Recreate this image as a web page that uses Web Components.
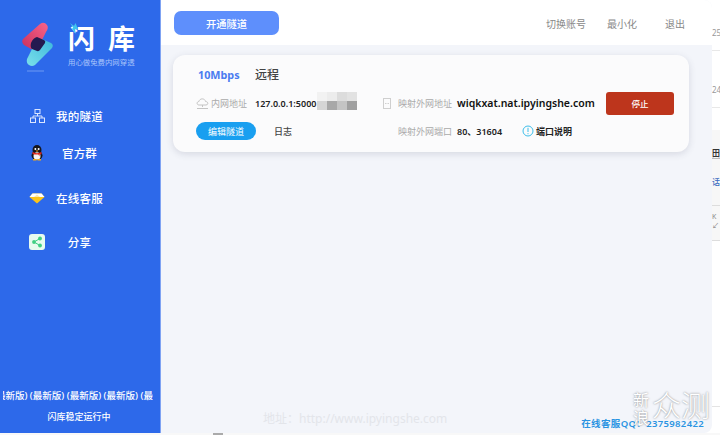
<!DOCTYPE html>
<html lang="zh">
<head>
<meta charset="utf-8">
<title>闪库</title>
<style>
    html, body { margin: 0; height: 100%; overflow: hidden; background: #fff; }
    body { font-family: "Noto Sans", "Noto Sans CJK SC", sans-serif; }
</style>
</head>
<body>
<app-window>
    <side-bar slot="side"></side-bar>
    <top-bar slot="top"></top-bar>
    <tunnel-card slot="main"></tunnel-card>
    <foot-note slot="foot"></foot-note>
    <page-edge slot="edge"></page-edge>
</app-window>

<script>
const CJK = '"Noto Sans", "Noto Sans CJK SC", sans-serif';

class AppWindow extends HTMLElement {
    constructor() {
        super();
        this.attachShadow({ mode: 'open' });
        this.shadowRoot.innerHTML = `
            <style>
                :host { display: block; width: 720px; height: 435px; font-family: ${CJK}; }
                .top { display: flex; height: 433px; }
                .win { width: 712px; height: 433px; display: flex; background: #f3f5fa; border-radius: 0 8px 8px 0; overflow: hidden; }
                .body { flex: 1; display: flex; flex-direction: column; min-width: 0; }
                .main { flex: 1; padding: 10px 23px 0 12px; }
                .edge { flex: 1; min-width: 0; }
                .under { height: 2px; background: #f8f8f8; padding-left: 213px; }
                .under div { width: 10px; height: 2px; background: #aaa; }
            </style>
            <div class="top">
                <div class="win">
                    <slot name="side"></slot>
                    <div class="body">
                        <slot name="top"></slot>
                        <div class="main"><slot name="main"></slot></div>
                        <slot name="foot"></slot>
                    </div>
                </div>
                <div class="edge"><slot name="edge"></slot></div>
            </div>
            <div class="under"><div></div></div>
        `;
    }
}

class SideBar extends HTMLElement {
    constructor() {
        super();
        this.attachShadow({ mode: 'open' });
        this.shadowRoot.innerHTML = `
            <style>
                :host { display: flex; flex-direction: column; width: 160px; height: 433px; flex: none; background: #2d69ea; border-right: 1px solid #7fa3f3; color: #fff; overflow: hidden; }
                .logo { display: flex; height: 106px; padding: 20px 0 0 21px; box-sizing: border-box; }
                .mark { width: 34px; height: 56px; flex: none; }
                .brand { margin-left: 13px; position: relative; }
                .name { font-size: 27px; line-height: 30px; font-weight: 700; display: flex; gap: 13px; margin-top: 4px; }
                .bolt { position: absolute; left: 2px; top: 3px; }
                .sub { font-size: 7.400px; line-height: 10px; color: #a9c4fa; margin-top: 3px; white-space: nowrap; }
                .spacer { flex: 1; }
                .ticker { height: 20px; line-height: 20px; font-size: 9.500px; font-weight: 500; white-space: nowrap; overflow: hidden; display: flex; justify-content: flex-end; margin: 2px 7px 0 3px; }
                .ticker span { flex: none; }
                .status { height: 22px; line-height: 22px; font-size: 9px; font-weight: 500; text-align: center; margin: 0 0 5px; padding-right: 2px; }
            </style>
            <div class="logo">
                <svg class="mark" viewBox="0 0 34 56">
                    <defs>
                        <linearGradient id="r" x1="0" y1="1" x2="1" y2="0"><stop offset="0" stop-color="#c92f5c"/><stop offset="1" stop-color="#f9648a"/></linearGradient>
                        <linearGradient id="c" x1="0" y1="1" x2="1" y2="0"><stop offset="0" stop-color="#7be0ea"/><stop offset="1" stop-color="#3cb8dc"/></linearGradient>
                    </defs>
                    <path d="M19 4Q23 1 26 5 28 8 25 12L17 28Q15 31 12 30L3 25Q0 22 2 19z" fill="url(#r)"/>
                    <path d="M21 19 30 23Q33 25 31 28L14 45Q11 47 8 45 5 43 6 39L11 29z" fill="url(#c)"/>
                    <path d="M10 23Q12 18 16 17L23 20Q25 21 24 23L19 30Q18 31.500 16 31L11 29Q9 27 10 23z" fill="#241a50"/>
                    <path d="M6 51H23" stroke="#6f9af2" stroke-width="1"/>
                </svg>
                <div class="brand">
                    <div class="name"><span>闪</span><span>库</span></div>
                    <svg class="bolt" width="9" height="11" viewBox="0 0 9 11"><path d="M0 0 4 3 5.500 0 8 6 5 6.500 6 11 2 6 3 4.500z" fill="#3fc3ef"/></svg>
                    <div class="sub">用心做免费内网穿透</div>
                </div>
            </div>
            <nav-item label="我的隧道" style="margin-top:0">
                <svg width="15" height="14" viewBox="0 0 15 14" fill="none" stroke="#dbe6ff" stroke-width="1"><rect x="5" y=".5" width="5" height="4"/><rect x=".5" y="9" width="5" height="4.500"/><rect x="9.500" y="9" width="5" height="4.500"/><path d="M7.500 4.500V7M3 9V7H12V9"/></svg>
            </nav-item>
            <nav-item label="官方群" style="margin-top:17px">
                <svg width="14" height="16" viewBox="0 0 14 16"><ellipse cx="7" cy="5" rx="4.500" ry="5" fill="#15151c"/><ellipse cx="7" cy="10.500" rx="5.500" ry="4.500" fill="#15151c"/><ellipse cx="7" cy="11" rx="3.500" ry="3.800" fill="#f4f4f4"/><circle cx="5.400" cy="4" r="1" fill="#fff"/><circle cx="8.600" cy="4" r="1" fill="#fff"/><path d="M5.500 5.500h3L7 7z" fill="#f2a81d"/><path d="M2.500 7C5 8.500 9 8.500 11.500 7V9.300L9.500 9.500 9.500 11.500 8.300 9.500C6 9.800 4 9.500 2.500 9z" fill="#e0281c"/><path d="M3 14h3.500v1.500H3zM7.500 14H11v1.500H7.500z" fill="#f2a81d"/></svg>
            </nav-item>
            <nav-item label="在线客服" style="margin-top:25px">
                <svg width="16" height="11" viewBox="0 0 16 11"><path d="M3.500 .5h9L15.500 4 8 10.500 .5 4z" fill="#fcc419"/><path d="M3.500 .5h9L15.500 4H.5z" fill="#fff"/><path d="M5 4 8 1.500 11 4z" fill="#ffe9a8"/></svg>
            </nav-item>
            <nav-item label="分享" style="margin-top:24px">
                <svg width="16" height="16" viewBox="0 0 16 16"><rect width="16" height="16" rx="3" fill="#e6fbef"/><g fill="#3fcf83"><circle cx="11" cy="4.500" r="1.900"/><circle cx="5" cy="8" r="1.900"/><circle cx="11" cy="11.500" r="1.900"/></g><path d="M11 4.500 5 8 11 11.500" stroke="#3fcf83" stroke-width="1" fill="none"/></svg>
            </nav-item>
            <div class="spacer"></div>
            <div class="ticker"><span>(最新版) (最新版) (最新版) (最新版) (最新版) (最</span></div>
            <div class="status">闪库稳定运行中</div>
        `;
    }
}

class NavItem extends HTMLElement {
    constructor() {
        super();
        this.attachShadow({ mode: 'open' });
        this.shadowRoot.innerHTML = `
            <style>
                :host { display: grid; grid-template-columns: 16px 1fr; align-items: center; height: 20px; padding: 0 50px 0 29px; }
                .icon { display: flex; justify-content: center; align-items: center; }
                .label { text-align: center; font-size: 11.500px; font-weight: 500; letter-spacing: .2px; color: #fff; padding-left: 4px; white-space: nowrap; }
            </style>
            <div class="icon"><slot></slot></div>
            <div class="label"></div>
        `;
    }
    connectedCallback() {
        this.shadowRoot.querySelector('.label').textContent = this.getAttribute('label') || '';
    }
}

class TopBar extends HTMLElement {
    constructor() {
        super();
        this.attachShadow({ mode: 'open' });
        this.shadowRoot.innerHTML = `
            <style>
                :host { display: flex; align-items: center; height: 45px; background: #fff; padding: 0 27px 0 13px; flex: none; font-size: 10px; color: #888; }
                .open { width: 105px; height: 24px; margin-top: 1px; background: #5e8ffc; border-radius: 7px; color: #fff; display: flex; align-items: center; justify-content: center; font-weight: 500; font-size: 10.300px; }
                .links { margin-left: auto; display: flex; margin-top: 1px; }
                .links span + span { margin-left: 21px; }
                .links span:last-child { margin-left: 28px; }
            </style>
            <div class="open">开通隧道</div>
            <div class="links"><span>切换账号</span><span>最小化</span><span>退出</span></div>
        `;
    }
}

class TunnelCard extends HTMLElement {
    constructor() {
        super();
        this.attachShadow({ mode: 'open' });
        this.shadowRoot.innerHTML = `
            <style>
                :host { display: block; height: 97px; background: #fbfbfc; border-radius: 12px; box-shadow: 0 2px 7px rgba(60,70,100,.16); box-sizing: border-box; padding: 10px 15px 0 23px; font-size: 9px; color: #222; }
                .head { display: flex; align-items: center; height: 18px; margin-left: 2px; }
                .rate { color: #4a7cf0; font-weight: 700; font-size: 10.800px; width: 57px; }
                .title { font-size: 12px; font-weight: 500; color: #444; }
                .row { display: grid; grid-template-columns: 187px 1fr 68px; align-items: center; }
                .one { height: 24px; margin-top: 8px; }
                .two { height: 20px; margin-top: 6px; }
                .cell { display: flex; align-items: center; min-width: 0; }
                .lab { color: #aaa; white-space: nowrap; }
                .val { font-weight: 600; white-space: nowrap; margin-left: 8px; }
                .mosaic { display: grid; grid-template-columns: repeat(4, 10px); grid-auto-rows: 9px; margin: 0 0 4px 1px; filter: blur(.6px); }
                .url { font-size: 10.500px; font-weight: 600; color: #111; margin-left: 5px; white-space: nowrap; }
                .stop { width: 68px; height: 23px; background: #bd351c; border-radius: 3px; color: #fff; display: flex; align-items: center; justify-content: center; font-size: 8.500px; font-weight: 500; }
                .edit { width: 60px; height: 18px; border-radius: 9px; background: #199ff0; color: #fff; display: flex; align-items: center; justify-content: center; }
                .log { margin-left: 18px; color: #444; font-weight: 500; }
                .ports { font-weight: 600; margin-left: 5px; width: 56px; white-space: nowrap; }
                .info { font-weight: 600; white-space: nowrap; }
            </style>
            <div class="head"><span class="rate">10Mbps</span><span class="title">远程</span></div>
            <div class="row one">
                <div class="cell">
                    <svg style="margin-right:2px;flex:none" width="13" height="13" viewBox="0 0 13 13" fill="none" stroke="#c4c4c4"><path d="M3 8C.5 8 .5 4.500 3 4.500 3.500 1 9 1 9.500 4.500 12.500 4.500 12.500 8 10 8z"/><path d="M6.500 8V10M1 11.500H12"/></svg>
                    <span class="lab">内网地址</span>
                    <span class="val">127.0.0.1:5000</span>
                    <div class="mosaic" id="mosaic"></div>
                </div>
                <div class="cell">
                    <svg style="margin-right:7px;flex:none" width="8" height="11" viewBox="0 0 8 11" fill="none" stroke="#cfcfcf"><rect x=".5" y=".5" width="7" height="10"/><path d="M2 5.500H3.500M4.500 5.500H6"/></svg>
                    <span class="lab">映射外网地址</span>
                    <span class="url">wiqkxat.nat.ipyingshe.com</span>
                </div>
                <div class="stop">停止</div>
            </div>
            <div class="row two">
                <div class="cell">
                    <div class="edit">编辑隧道</div>
                    <span class="log">日志</span>
                </div>
                <div class="cell" style="padding-left:15px">
                    <span class="lab">映射外网端口</span>
                    <span class="ports">80、31604</span>
                    <svg style="margin:0 2px 0 9px;flex:none" width="12" height="12" viewBox="0 0 12 12" fill="none" stroke="#3dbde8" stroke-width="1"><circle cx="6" cy="6" r="5"/><path d="M6 2.800V7M6 8.200V9.200"/></svg>
                    <span class="info">端口说明</span>
                </div>
            </div>
        `;
        const shades = ['#f2f2f2', '#ececec', '#dcdcdc', '#e2e2e2', '#d5d5d5', '#a8a8a8', '#c4c4c4', '#a0a0a0'];
        const m = this.shadowRoot.getElementById('mosaic');
        shades.forEach(c => {
            const d = document.createElement('div');
            d.style.background = c;
            m.appendChild(d);
        });
    }
}

class FootNote extends HTMLElement {
    constructor() {
        super();
        this.attachShadow({ mode: 'open' });
        this.shadowRoot.innerHTML = `
            <style>
                :host { display: flex; align-items: flex-end; justify-content: space-between; height: 30px; padding: 0 8px 2px 102px; flex: none; position: relative; }
                .addr { font-size: 12px; color: #e3e5ea; line-height: 18px; margin-bottom: 3px; }
                .qq { font-size: 9.500px; font-weight: 600; color: #2a94e2; line-height: 14px; letter-spacing: .35px; }
                .wm { position: absolute; right: 2px; bottom: 6px; display: flex; align-items: flex-start; gap: 3px; color: #fff; pointer-events: none; text-shadow: 0 0 2px rgba(0,0,0,.5); }
                .xl { font-size: 16px; line-height: 18px; width: 16px; }
                .zc { font-size: 29px; line-height: 30px; font-weight: 300; white-space: nowrap; }
            </style>
            <span class="addr">地址：http://www.ipyingshe.com</span>
            <span class="qq">在线客服QQ：2375982422</span>
            <div class="wm"><span class="xl">新浪</span><span class="zc">众测</span></div>
        `;
    }
}

class PageEdge extends HTMLElement {
    constructor() {
        super();
        this.attachShadow({ mode: 'open' });
        this.shadowRoot.innerHTML = `
            <style>
                :host { display: block; overflow: hidden; font-size: 8px; color: #999; white-space: nowrap; }
                div { overflow: hidden; box-sizing: border-box; }
                .n { height: 51px; padding-top: 27px; line-height: 12px; border-bottom: 1px solid #e8e8e8; }
                .n2 { height: 57px; padding-top: 33px; line-height: 12px; border-bottom: 1px solid #e8e8e8; }
                .g { height: 111px; margin-top: 22px; background: #f7f7f7; border-bottom: 1px solid #ddd; }
                .a { height: 29px; padding-top: 17px; color: #333; line-height: 12px; font-weight: 600; border-bottom: 1px solid #bbb; }
                .b { height: 47px; padding-top: 17px; color: #3b6cc0; line-height: 12px; font-weight: 500; border-bottom: 1px solid #ddd; }
                .c { padding-top: 6px; line-height: 9px; color: #888; font-size: 7px; }
                .d { margin-top: 165px; border-top: 1px solid #e4e4e4; }
            </style>
            <div class="n">25</div>
            <div class="n2">24</div>
            <div class="g">
                <div class="a">田</div>
                <div class="b">话</div>
                <div class="c">K<br>↙</div>
            </div>
            <div class="d"></div>
        `;
    }
}

customElements.define('nav-item', NavItem);
customElements.define('side-bar', SideBar);
customElements.define('top-bar', TopBar);
customElements.define('tunnel-card', TunnelCard);
customElements.define('foot-note', FootNote);
customElements.define('page-edge', PageEdge);
customElements.define('app-window', AppWindow);
</script>
</body>
</html>
